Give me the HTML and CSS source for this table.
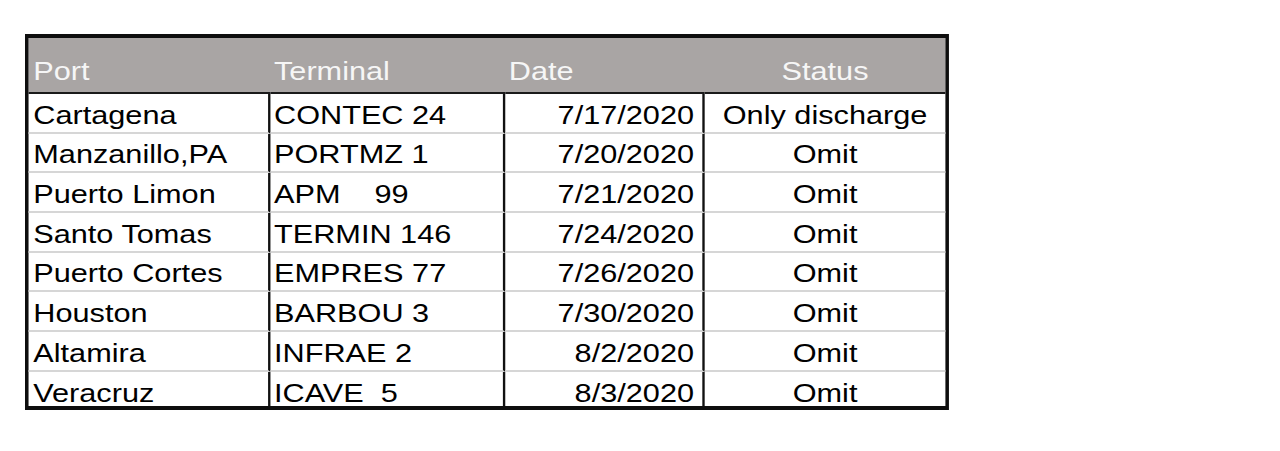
FILE: index.html
```html
<!DOCTYPE html>
<html lang="en">
<head>
<meta charset="utf-8">
<title>Port schedule</title>
<link rel="stylesheet" href="styles.css">
</head>
<body class="page">
<table class="sched">
  <thead>
    <tr class="head-row">
      <th class="cell head col-port">Port</th>
      <th class="cell head col-term">Terminal</th>
      <th class="cell head col-date">Date</th>
      <th class="cell head col-status">Status</th>
    </tr>
  </thead>
  <tbody>
    <tr class="row"><td class="cell port">Cartagena</td><td class="cell term">CONTEC 24</td><td class="cell date">7/17/2020</td><td class="cell status">Only discharge</td></tr>
    <tr class="row"><td class="cell port">Manzanillo,PA</td><td class="cell term">PORTMZ 1</td><td class="cell date">7/20/2020</td><td class="cell status">Omit</td></tr>
    <tr class="row"><td class="cell port">Puerto Limon</td><td class="cell term">APM    99</td><td class="cell date">7/21/2020</td><td class="cell status">Omit</td></tr>
    <tr class="row"><td class="cell port">Santo Tomas</td><td class="cell term">TERMIN 146</td><td class="cell date">7/24/2020</td><td class="cell status">Omit</td></tr>
    <tr class="row"><td class="cell port">Puerto Cortes</td><td class="cell term">EMPRES 77</td><td class="cell date">7/26/2020</td><td class="cell status">Omit</td></tr>
    <tr class="row"><td class="cell port">Houston</td><td class="cell term">BARBOU 3</td><td class="cell date">7/30/2020</td><td class="cell status">Omit</td></tr>
    <tr class="row"><td class="cell port">Altamira</td><td class="cell term">INFRAE 2</td><td class="cell date">8/2/2020</td><td class="cell status">Omit</td></tr>
    <tr class="row row-last"><td class="cell port">Veracruz</td><td class="cell term">ICAVE  5</td><td class="cell date">8/3/2020</td><td class="cell status">Omit</td></tr>
  </tbody>
</table>
</body>
</html>
```

FILE: styles.css
```css
html, body {
  margin: 0;
  background: #ffffff;
}

.page {
  padding: 34px 0 0 25px;
  font-family: "Liberation Sans", Arial, sans-serif;
}

.sched {
  box-sizing: border-box;
  width: 783px;
  table-layout: fixed;
  border-collapse: separate;
  border-spacing: 0;
  border-style: solid;
  border-color: #0e0e0e;
  border-width: 4px 3px;
  font-size: 26px;
  background: linear-gradient(#a9a5a4, #a9a5a4) 0 0 / 100% 54px no-repeat, #ffffff;
  transform: scaleX(1.18);
  transform-origin: 0 0;
}

.cell {
  box-sizing: border-box;
  padding: 0 3px;
  white-space: pre;
  vertical-align: bottom;
  line-height: 26px;
  font-weight: normal;
  text-align: left;
}

.row .cell:not(:last-child) {
  border-right: 2px solid #111111;
}

.head {
  height: 56px;
  padding-bottom: 8px;
  color: #f6f6f6;
  border-bottom: 2px solid #1a1a1a;
}

.col-port { width: 205px; padding-left: 4px; }
.col-term { width: 199px; }
.col-date { width: 169px; }
.col-status { width: 204px; text-align: center; }

.row .cell {
  height: 39.7px;
  padding-bottom: 4px;
  color: #000000;
  border-bottom: 2px solid #d6d6d6;
}

.row-last .cell {
  height: 34.1px;
  padding-bottom: 0;
  border-bottom: 0;
}

.port { padding-left: 4px; }

.date {
  text-align: right;
  padding-right: 7px;
}

.status {
  text-align: center;
}
```
